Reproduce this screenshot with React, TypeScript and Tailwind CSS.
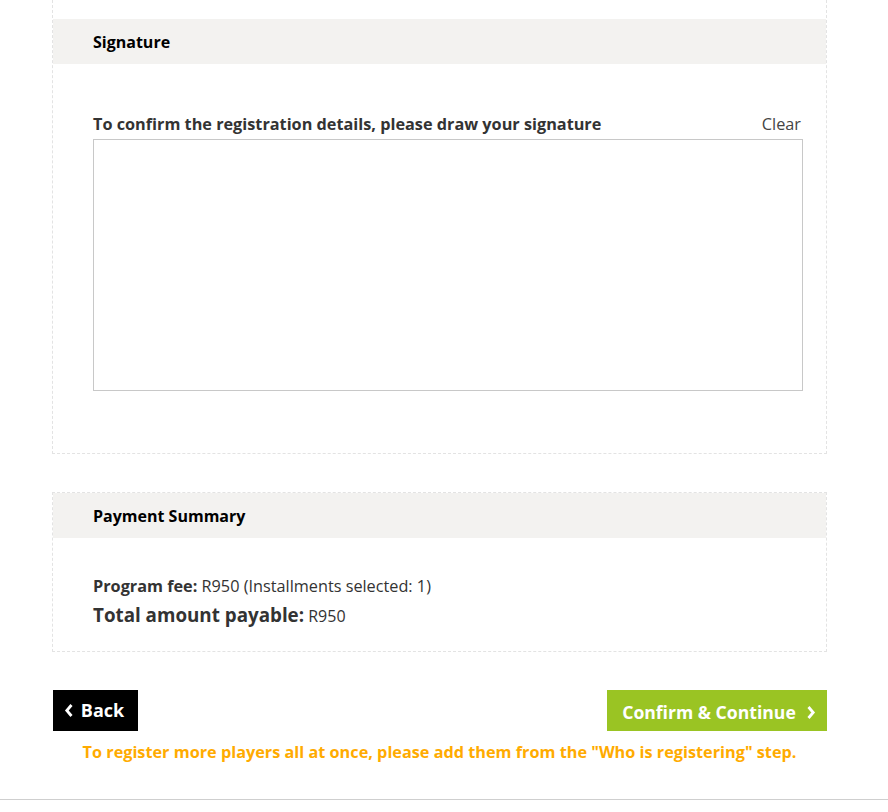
export default function App() {
  return (
    <div
      className="min-h-[812px] bg-white text-[#333]"
      style={{ fontFamily: '"Open Sans", "Noto Sans", sans-serif' }}
    >
      <div className="ml-[52px] w-[775px]">
        {/* Signature */}
        <div className="border-x border-b border-dashed border-[#e3e3e3] pt-[19px]">
          <div className="flex h-[45px] items-center bg-[#f3f2f0] px-[40px]">
            <h2 className="text-[16px] font-bold text-black">Signature</h2>
          </div>
          <div className="px-[40px] pt-[49px] pb-[62px]">
            <div className="flex w-[710px] items-end justify-between pr-[2px]">
              <label className="text-[16.25px] font-bold leading-[22px]">
                To confirm the registration details, please draw your signature
              </label>
              <button className="text-[16.25px] leading-[22px] text-[#444]">Clear</button>
            </div>
            <div className="mt-[4px] h-[252px] w-[710px] border border-[#c8c8c8] bg-white" />
          </div>
        </div>

        {/* Payment Summary */}
        <div className="mt-[38px] border border-dashed border-[#e3e3e3]">
          <div className="flex h-[45px] items-center bg-[#f3f2f0] px-[40px]">
            <h2 className="text-[16px] font-bold text-black">Payment Summary</h2>
          </div>
          <div className="px-[40px] pt-[36px] pb-[22px]">
            <p className="text-[16.25px] leading-[24px]">
              <span className="font-bold">Program fee:</span> R950 (Installments selected: 1)
            </p>
            <p className="mt-[4px] text-[16px] leading-[26px]">
              <span className="text-[18.8px] font-bold">Total amount payable:</span> R950
            </p>
          </div>
        </div>

        {/* Actions */}
        <div className="mt-[38px] flex items-start justify-between pl-[1px]">
          <button className="flex h-[41px] w-[85px] items-center justify-center gap-[7px] bg-black pr-[3px] text-[18px] font-bold text-white">
            <svg width="10" height="15" viewBox="0 0 10 15" fill="none">
              <path d="M7.5 2 L2.8 7.5 L7.5 13" stroke="white" strokeWidth="2.8" />
            </svg>
            Back
          </button>
          <button className="flex h-[41px] w-[220px] items-center justify-center gap-[10px] bg-[#9ac423] pt-[4px] pl-[4px] text-[17.6px] font-bold text-white">
            Confirm &amp; Continue
            <svg width="10" height="15" viewBox="0 0 10 15" fill="none">
              <path d="M2.5 2 L7.2 7.5 L2.5 13" stroke="white" strokeWidth="2.8" />
            </svg>
          </button>
        </div>
        <p className="mt-[9px] text-center text-[16.25px] font-bold text-[#ffab00]">
          To register more players all at once, please add them from the "Who is registering" step.
        </p>
      </div>
      <div className="mt-[35px] border-t border-[#cfcfcf]" />
    </div>
  );
}
